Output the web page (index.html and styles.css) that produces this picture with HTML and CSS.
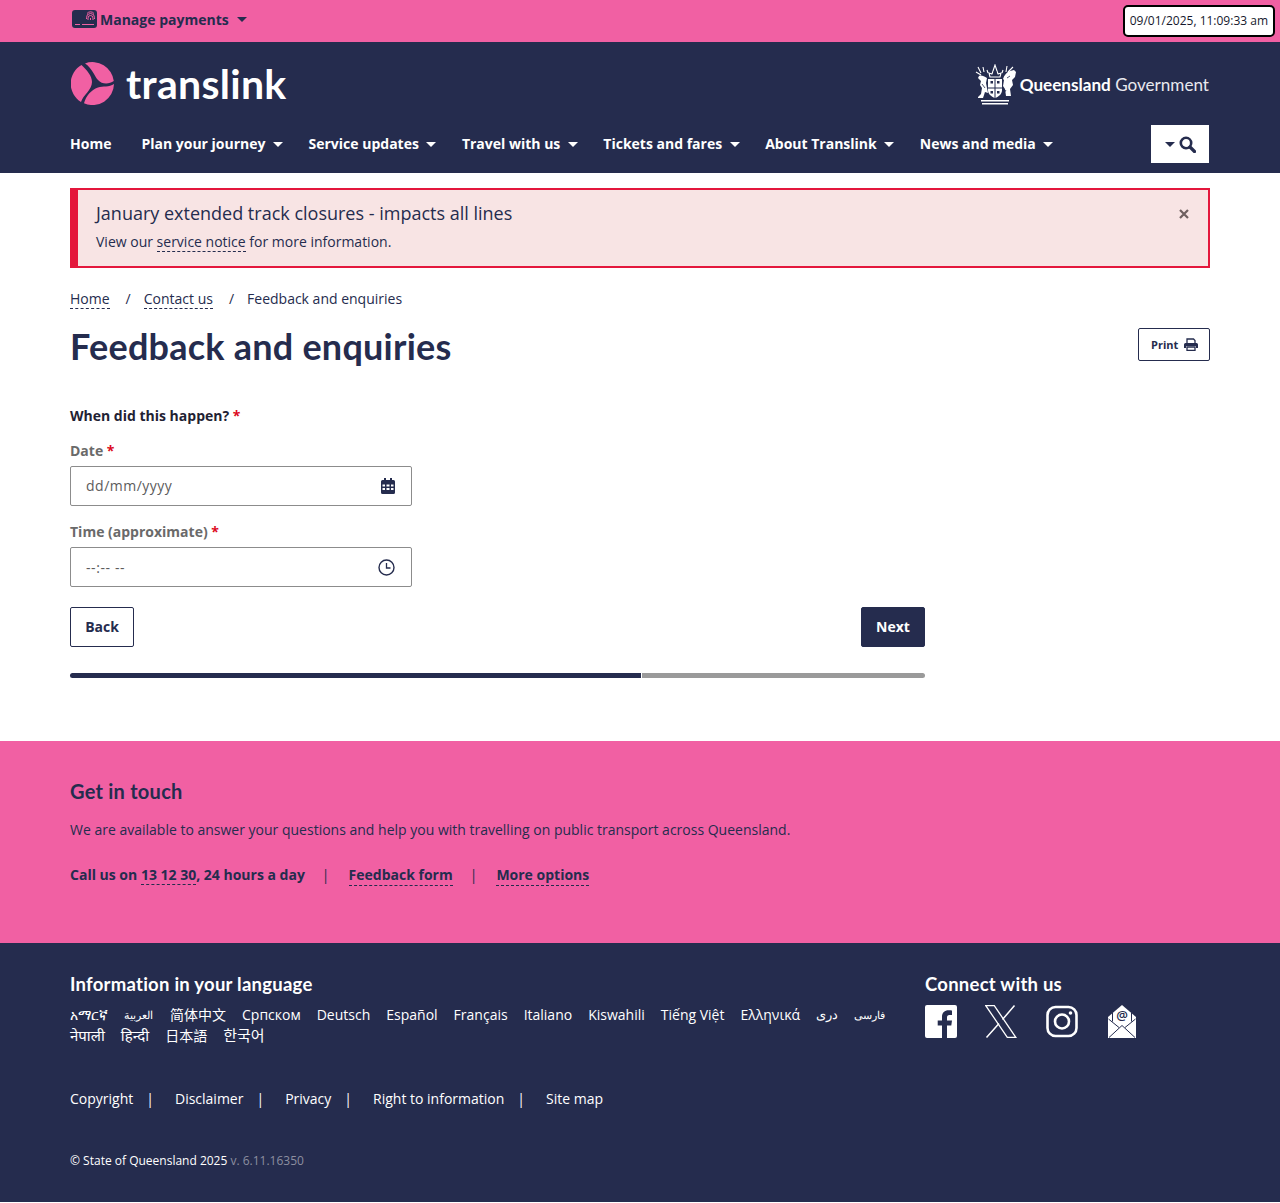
FILE: index.html
```html
<!DOCTYPE html>
<html lang="en">
<head>
    <meta charset="UTF-8">
    <meta name="viewport" content="width=device-width, initial-scale=1.0">
    <title>Feedback and enquiries</title>
    <link rel="stylesheet" href="styles.css">
</head>
<body>

    <!-- Top strip -->
    <div class="topbar">
        <div class="wrap topbar-inner">
            <a class="manage" href="#">
                <svg class="card-icon" width="25" height="18" viewBox="0 0 25 18">
                    <rect x="0" y="0" width="25" height="18" rx="3" fill="#252c4e"/>
                    <path d="M3 14.500h5M10 14.500h12" stroke="#f160a3" stroke-width="1" fill="none"/>
                    <path d="M16 10V8a2.500 2.500 0 0 1 5 0v2M18.500 10V8M14.500 9V7.500a4 4 0 0 1 8 0V9M15 3.500a4.500 4.500 0 0 1 7 0" stroke="#f160a3" stroke-width="1" fill="none"/>
                </svg>
                Manage payments
                <span class="caret"></span>
            </a>
        </div>
        <div class="clock">09/01/2025, 11:09:33 am</div>
    </div>

    <!-- Header and navigation -->
    <header class="site-header">
        <div class="wrap">
            <div class="brand-row">
                <a class="logo" href="#">
                    <svg width="43" height="43" viewBox="0 0 43 43">
                        <path fill="#f160a3" d="M14 1.400A21.500 21.500 0 0 1 42.800 19C38 22.500 31 22.500 27 18C23.500 14 21 6 14 1.400Z"/>
                        <path fill="#f160a3" d="M10.500 3A21.500 21.500 0 0 0 10 40C12 33 21 28 21 20C21 14 16 8 10.500 3Z"/>
                        <path fill="#f160a3" d="M43 22A21.500 21.500 0 0 1 13 41.300C15 34 20 28 27 25.500C32 23.800 38 25.500 43 22Z"/>
                    </svg>
                    <span class="logo-text">translink</span>
                </a>
                <a class="qld" href="#">
                    <svg width="44" height="41" viewBox="2.500 0 41 41">
                        <g fill="#fff">
                            <path d="M15 15h14v11c0 4-3 6.500-7 8-4-1.500-7-4-7-8z"/>
                            <path d="M14 14c-3-2-6-3-8-2l-1 2 3 3-1 4 2 3-1 6-3 3v1h5l2-6 3 1-1-5-1-5z"/>
                            <path d="M30 15c1-4 4-7 7-8l4-1 2 2-1 5-3 3 1 5-3 4 1 7h-5l-1-7-2-3 1-6z"/>
                            <rect x="8" y="36" width="28" height="1.500"/>
                            <rect x="9" y="39" width="26" height="1.500"/>
                        </g>
                        <path d="M22 15v19M15 24h14" stroke="#252c4e" stroke-width="1"/>
                        <path d="M17.500 17h2.500v2.500h-2.500zM24 17h2.500v2.500H24zM17.500 27h2.500v2.500h-2.500zM24 27h2.500v2.500H24z" fill="#252c4e"/>
                        <path d="M33 26l-2 3M9 20l3 4M37 12l-3 2" stroke="#252c4e" stroke-width="0.800" fill="none"/>
                        <path d="M17 13l-1-4 3 1 1-3 2-6 2 6 1 3 3-1-1 4zM3 8l5 3M5 3l3 6M10 3l1 5M14 6l1 3M30 6l-1 3M34 2l-1 6M40 3l-5 5" stroke="#fff" stroke-width="1.100" fill="none"/>
                        <path d="M20 8h4M19 11h6" stroke="#252c4e" stroke-width="0.700"/>
                    </svg>
                    <span class="qld-text"><b>Queensland</b> Government</span>
                </a>
            </div>
            <nav class="main-nav">
                <a href="#">Home</a>
                <a href="#">Plan your journey<span class="caret"></span></a>
                <a href="#">Service updates<span class="caret"></span></a>
                <a href="#">Travel with us<span class="caret"></span></a>
                <a href="#">Tickets and fares<span class="caret"></span></a>
                <a href="#">About Translink<span class="caret"></span></a>
                <a href="#">News and media<span class="caret"></span></a>
                <button class="search-btn" type="button">
                    <span class="caret"></span>
                    <svg width="17" height="17" viewBox="0 0 17 17">
                        <circle cx="7" cy="7" r="5.200" fill="none" stroke="#252c4e" stroke-width="2.600"/>
                        <path d="M11 11l4.500 4.500" stroke="#252c4e" stroke-width="3.200" stroke-linecap="round"/>
                    </svg>
                </button>
            </nav>
        </div>
    </header>

    <main class="wrap">
        <!-- Service alert -->
        <div class="alert">
            <div>
                <p class="alert-title">January extended track closures - impacts all lines</p>
                <p class="alert-text">View our <a href="#">service notice</a> for more information.</p>
            </div>
            <button class="alert-close" type="button">
                <svg width="10" height="10" viewBox="0 0 10 10">
                    <path d="M1 1l8 8M9 1l-8 8" stroke="#6e5f5f" stroke-width="2.200"/>
                </svg>
            </button>
        </div>

        <ol class="breadcrumb">
            <li><a href="#">Home</a></li>
            <li><a href="#">Contact us</a></li>
            <li>Feedback and enquiries</li>
        </ol>

        <div class="title-row">
            <h1>Feedback and enquiries</h1>
            <button class="print-btn" type="button">
                Print
                <svg width="14" height="13" viewBox="0 0 14 13">
                    <path d="M3 5V1h6.500L11 2.500V5" fill="none" stroke="#252c4e" stroke-width="1.300"/>
                    <path d="M0 6.500a1.500 1.500 0 0 1 1.500-1.500h11a1.500 1.500 0 0 1 1.500 1.500V10h-2V8H2v2H0z" fill="#252c4e"/>
                    <path d="M3 9h8v3.300H3z" fill="none" stroke="#252c4e" stroke-width="1.300"/>
                </svg>
            </button>
        </div>

        <form class="enquiry-form">
            <p class="question">When did this happen? <span class="req">*</span></p>

            <label for="happen-date">Date <span class="req">*</span></label>
            <div class="field">
                <input type="text" id="happen-date" placeholder="dd/mm/yyyy">
                <svg width="14" height="16" viewBox="0 0 14 16">
                    <path fill="#252c4e" fill-rule="evenodd" d="M3 0h2v2h4V0h2v2h1.500A1.500 1.500 0 0 1 14 3.500V14.500A1.500 1.500 0 0 1 12.500 16h-11A1.500 1.500 0 0 1 0 14.500V3.500A1.500 1.500 0 0 1 1.500 2H3zM1.500 6.500v2h2.500v-2zM5.500 6.500v2h3v-2zM10 6.500v2h2.500v-2zM1.500 10v2h2.500v-2zM5.500 10v2h3v-2zM10 10v2h2.500v-2z"/>
                </svg>
            </div>

            <label for="happen-time">Time (approximate) <span class="req">*</span></label>
            <div class="field">
                <input type="text" id="happen-time" class="time-input" placeholder="--:-- --">
                <svg width="17" height="17" viewBox="0 0 17 17">
                    <circle cx="8.500" cy="8.500" r="7.500" fill="none" stroke="#252c4e" stroke-width="1.400"/>
                    <path d="M8.500 4v5h4" fill="none" stroke="#252c4e" stroke-width="1.300"/>
                </svg>
            </div>

            <div class="form-actions">
                <button class="btn btn-back" type="button">Back</button>
                <button class="btn btn-next" type="button">Next</button>
            </div>

            <div class="progress">
                <div class="progress-done"></div>
                <div class="progress-rest"></div>
            </div>
        </form>
    </main>

    <!-- Get in touch -->
    <section class="touch">
        <div class="wrap">
            <h2>Get in touch</h2>
            <p class="touch-text">We are available to answer your questions and help you with travelling on public transport across Queensland.</p>
            <div class="touch-links">
                <span>Call us on <a href="#">13 12 30</a>, 24 hours a day</span>
                <i>|</i>
                <a href="#">Feedback form</a>
                <i>|</i>
                <a href="#">More options</a>
            </div>
        </div>
    </section>

    <footer class="site-footer">
        <div class="wrap">
            <div class="footer-top">
                <div class="languages">
                    <h3>Information in your language</h3>
                    <div class="lang-list">
                        <a href="#">አማርኛ</a>
                        <a href="#" class="small-script" dir="rtl">العربية</a>
                        <a href="#">简体中文</a>
                        <a href="#">Српском</a>
                        <a href="#">Deutsch</a>
                        <a href="#">Español</a>
                        <a href="#">Français</a>
                        <a href="#">Italiano</a>
                        <a href="#">Kiswahili</a>
                        <a href="#">Tiếng Việt</a>
                        <a href="#">Ελληνικά</a>
                        <a href="#" class="dari" dir="rtl">دری</a>
                        <a href="#" class="small-script" dir="rtl">فارسی</a>
                        <a href="#" class="wide-script">नेपाली</a>
                        <a href="#" class="wide-script">हिन्दी</a>
                        <a href="#">日本語</a>
                        <a href="#" class="wide-script">한국어</a>
                    </div>
                </div>
                <div class="connect">
                    <h3>Connect with us</h3>
                    <div class="social">
                        <svg width="32" height="33" viewBox="0 0 32 33">
                            <path fill="#fff" d="M2 0h28a2 2 0 0 1 2 2v29a2 2 0 0 1-2 2h-8V20.500h4.300l.7-5H22v-3c0-1.500.5-2.500 2.500-2.500H27V5.500c-.5-.1-2-.2-3.500-.2-3.700 0-6.500 2.300-6.500 6.500v3.700h-4.300v5H17V33H2a2 2 0 0 1-2-2V2a2 2 0 0 1 2-2z"/>
                        </svg>
                        <svg width="33" height="33" viewBox="0 0 33 33">
                            <path fill="none" stroke="#fff" stroke-width="1.300" d="M0.800 0.700h8.500l21.500 31.600h-8.500z"/>
                            <path fill="none" stroke="#fff" stroke-width="1.500" d="M29.500 0.500L17.500 14.500M14 18.500L1.500 32.500"/>
                        </svg>
                        <svg width="32" height="33" viewBox="0 0 32 33">
                            <rect x="1.500" y="2" width="29" height="29" rx="8" fill="none" stroke="#fff" stroke-width="2.600"/>
                            <circle cx="16" cy="16.500" r="7" fill="none" stroke="#fff" stroke-width="2.600"/>
                            <circle cx="24.500" cy="8" r="1.800" fill="#fff"/>
                        </svg>
                        <svg class="mail-icon" width="28" height="33" viewBox="0 0 28 33">
                            <path fill="#fff" d="M14 0L28 12V33H0V12Z"/>
                            <path fill="none" stroke="#252c4e" stroke-width="1" d="M0.500 14L11 22.500M27.500 14L17 22.500M1 32.500L14 20.500L27 32.500M4.500 16.500V8M23.500 16.500V8"/>
                            <text class="mail-at" x="14" y="15" text-anchor="middle">@</text>
                        </svg>
                    </div>
                </div>
            </div>

            <div class="legal-links">
                <a href="#">Copyright</a><i>|</i>
                <a href="#">Disclaimer</a><i>|</i>
                <a href="#">Privacy</a><i>|</i>
                <a href="#">Right to information</a><i>|</i>
                <a href="#">Site map</a>
            </div>

            <p class="copyright">© State of Queensland 2025 <span>v. 6.11.16350</span></p>
        </div>
    </footer>

</body>
</html>
```

FILE: styles.css
```css
:root {
    --pink: #f160a3;
    --navy: #252c4e;
    --red: #e4173c;
    --alert-bg: #f8e4e4;
    --text-grey: #6a6a6a;
}

* {
    box-sizing: border-box;
}

body {
    font-family: "Open Sans", "Noto Sans", "Noto Sans CJK SC", Arial, sans-serif;
    margin: 0;
    padding: 0 0 1px;
    background-color: white;
    color: var(--navy);
    font-size: 14px;
}

a {
    color: inherit;
    text-decoration: none;
}

p {
    margin: 0;
}

button {
    font-family: inherit;
    cursor: pointer;
}

.wrap {
    width: 1140px;
    margin: 0 auto;
}

.caret {
    display: inline-block;
    width: 0;
    height: 0;
    margin-left: 7px;
    border-left: 5px solid transparent;
    border-right: 5px solid transparent;
    border-top: 5px solid currentColor;
    vertical-align: 2px;
}

/* Top strip */
.topbar {
    position: relative;
    height: 42px;
    background: var(--pink);
}

.topbar-inner {
    height: 38px;
    padding-left: 2px;
    display: flex;
    align-items: center;
}

.manage {
    display: flex;
    align-items: center;
    font-size: 14px;
    font-weight: 700;
}

.card-icon {
    margin-right: 3px;
}

.manage .caret {
    margin-left: 8px;
}

.clock {
    position: absolute;
    top: 5px;
    right: 5px;
    height: 32px;
    padding: 0 5px;
    line-height: 28px;
    font-size: 12px;
    color: #15182c;
    background: white;
    border: 2px solid black;
    border-radius: 5px;
}

/* Header */
.site-header {
    height: 131px;
    background: var(--navy);
    color: white;
}

.brand-row {
    height: 83px;
    display: flex;
    justify-content: space-between;
    align-items: center;
}

.logo {
    display: flex;
    align-items: center;
    margin-left: 1px;
}

.logo-text {
    margin-left: 12px;
    font-family: "Lato", sans-serif;
    font-size: 41px;
    font-weight: 700;
    letter-spacing: 0.3px;
    line-height: 44px;
}

.qld {
    display: flex;
    align-items: center;
    margin-left: auto;
    margin-right: 1px;
    margin-top: 2px;
}

.qld-text {
    margin-left: 2px;
    font-family: "Lato", sans-serif;
    font-size: 17.100px;
    color: #e9e9ee;
}

.qld-text b {
    color: white;
}

.main-nav {
    height: 36px;
    margin-bottom: 2px;
    display: flex;
    align-items: center;
    font-size: 14px;
    font-weight: 700;
}

.main-nav a {
    margin-right: 30px;
}

.main-nav a .caret {
    margin-left: 7.500px;
}

.main-nav a:nth-child(n+2) {
    margin-right: 25.500px;
}

.search-btn {
    margin: 2px 1px 0 auto;
    width: 58px;
    height: 38px;
    padding: 0 0 0 1px;
    display: flex;
    flex-shrink: 0;
    align-items: center;
    justify-content: center;
    gap: 4px;
    color: var(--navy);
    background: white;
    border: none;
}

.search-btn .caret {
    margin: 0;
    vertical-align: 0;
}

/* Alert */
.alert {
    margin-top: 15px;
    height: 80px;
    padding: 11px 19px 0 18px;
    display: flex;
    justify-content: space-between;
    background: var(--alert-bg);
    border: 2px solid var(--red);
    border-left-width: 8px;
}

.alert-title {
    font-size: 18px;
    line-height: 25px;
}

.alert-text {
    margin-top: 6px;
    line-height: 20px;
}

.alert-text a {
    border-bottom: 1px dashed var(--navy);
}

.alert-close {
    height: 20px;
    margin: 3px 0 0;
    padding: 0;
    background: none;
    border: none;
}

/* Breadcrumb */
.breadcrumb {
    list-style: none;
    display: flex;
    margin: 21px 0 0;
    padding: 0;
    line-height: 20px;
}

.breadcrumb li + li::before {
    content: "/";
    margin: 0 13px 0 16px;
}

.breadcrumb a {
    border-bottom: 1px dashed var(--navy);
}

.title-row {
    display: flex;
    justify-content: space-between;
    align-items: flex-start;
    margin-top: 9px;
}

h1 {
    margin: 0;
    font-family: "Lato", "Open Sans", sans-serif;
    font-size: 36px;
    font-weight: 700;
    letter-spacing: 0.23px;
    line-height: 56px;
}

.print-btn {
    display: flex;
    align-items: center;
    gap: 6px;
    width: 72px;
    height: 33px;
    margin-top: 10px;
    padding: 0 0 0 12px;
    font-size: 11px;
    font-weight: 700;
    color: var(--navy);
    background: white;
    border: 1px solid var(--navy);
    border-radius: 2px;
}

/* Form */
.enquiry-form {
    width: 855px;
    margin-top: 32px;
}

.question {
    font-weight: 700;
    line-height: 20px;
    color: #1f2233;
}

.req {
    color: #dc0a1e;
}

label {
    display: block;
    margin-top: 15px;
    line-height: 20px;
    font-weight: 700;
    color: var(--text-grey);
}

.field {
    width: 342px;
    height: 40px;
    margin-top: 5px;
    padding: 0 16px 0 15px;
    display: flex;
    align-items: center;
    justify-content: space-between;
    border: 1px solid #8c8c8c;
    border-radius: 2px;
}

.field input {
    flex: 1;
    min-width: 0;
    padding: 0 0 1px;
    border: none;
    outline: none;
    font-family: inherit;
    font-size: 14px;
    letter-spacing: 0.5px;
    color: #555;
}

.field .time-input {
    padding: 0;
    letter-spacing: 0.6px;
}

.field input::placeholder {
    color: #5c5c5c;
    opacity: 1;
}

label + .field + label {
    margin-top: 16px;
}

.form-actions {
    display: flex;
    justify-content: space-between;
    margin-top: 20px;
}

.btn {
    width: 64px;
    height: 40px;
    padding: 0 0 2px;
    font-size: 14px;
    font-weight: 700;
    border: 1px solid var(--navy);
    border-radius: 2px;
}

.btn-back {
    color: var(--navy);
    background: white;
}

.btn-next {
    color: white;
    background: var(--navy);
}

.progress {
    display: flex;
    gap: 1px;
    height: 5px;
    margin-top: 26px;
}

.progress-done {
    width: 571px;
    background: var(--navy);
    border-radius: 3px 0 0 3px;
}

.progress-rest {
    flex: 1;
    background: #9a9a9a;
    border-radius: 0 3px 3px 0;
}

/* Get in touch */
.touch {
    height: 202px;
    margin-top: 63px;
    padding-top: 37px;
    background: var(--pink);
}

h2 {
    margin: 0;
    font-family: "Lato", "Open Sans", sans-serif;
    font-size: 20px;
    font-weight: 700;
    letter-spacing: 0.25px;
    line-height: 26px;
}

.touch-text {
    margin-top: 16px;
    line-height: 20px;
}

.touch-links {
    display: flex;
    margin-top: 25px;
    line-height: 20px;
    font-weight: 700;
}

.touch-links a {
    border-bottom: 1px dashed var(--navy);
}

.touch-links span a {
    display: inline-block;
    line-height: 18px;
}

.touch-links i {
    margin: 0 19px 0 17px;
    font-style: normal;
    font-weight: 400;
}

/* Footer */
.site-footer {
    height: 259px;
    padding-top: 29px;
    background: var(--navy);
    color: white;
}

.footer-top {
    display: flex;
    height: 76px;
}

.languages {
    width: 855px;
}

h3 {
    margin: 0;
    font-family: "Lato", "Open Sans", sans-serif;
    font-size: 18.500px;
    font-weight: 700;
    letter-spacing: 0.25px;
    line-height: 24px;
}

.lang-list {
    width: 830px;
    display: flex;
    flex-wrap: wrap;
    column-gap: 16px;
    margin-top: 8px;
    line-height: 21px;
}

.small-script {
    font-size: 11px;
    margin-right: 1px;
}

.dari {
    font-size: 12.500px;
}

.wide-script {
    font-size: 15px;
}

.social {
    display: flex;
    align-items: center;
    gap: 28px;
    margin-top: 9px;
}

.mail-icon {
    margin-left: 2px;
}

.mail-at {
    font-size: 13px;
    font-weight: 600;
    fill: var(--navy);
}

.legal-links {
    display: flex;
    margin-top: 41px;
    line-height: 20px;
}

.legal-links i {
    margin: 0 21px 0 13px;
    font-style: normal;
}

.copyright {
    margin-top: 42px;
    font-size: 12px;
    line-height: 20px;
}

.copyright span {
    color: #8c8fa0;
}
```
